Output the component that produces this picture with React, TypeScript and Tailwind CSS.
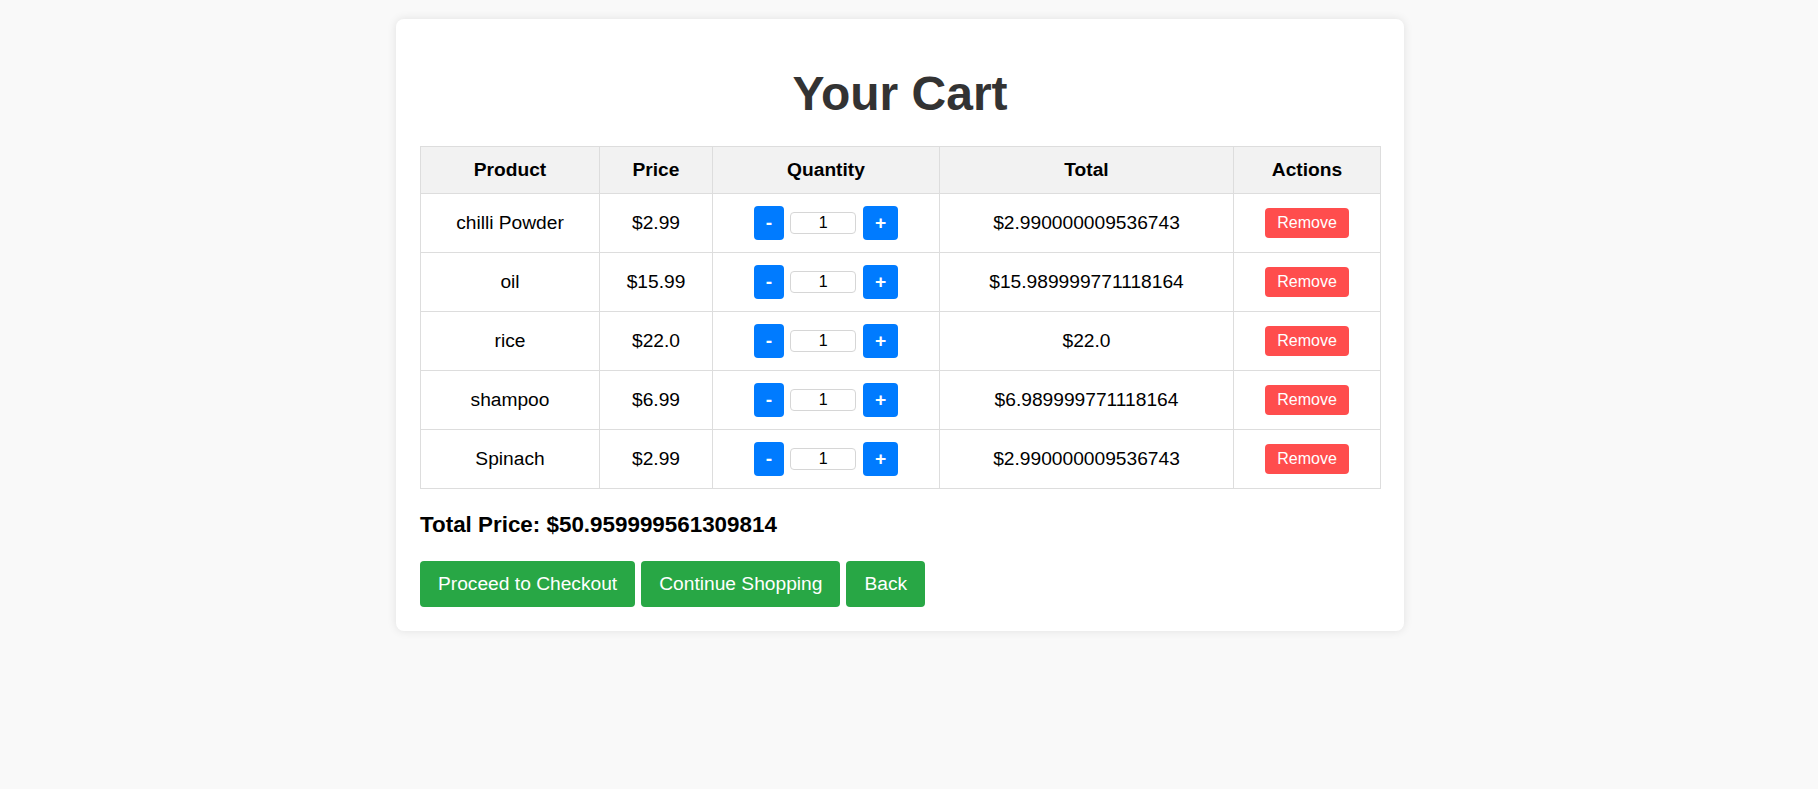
import React from "react";

interface CartItem {
  name: string;
  price: string;
  qty: number;
  total: string;
}

const items: CartItem[] = [
  { name: "chilli Powder", price: "$2.99", qty: 1, total: "$2.990000009536743" },
  { name: "oil", price: "$15.99", qty: 1, total: "$15.989999771118164" },
  { name: "rice", price: "$22.0", qty: 1, total: "$22.0" },
  { name: "shampoo", price: "$6.99", qty: 1, total: "$6.989999771118164" },
  { name: "Spinach", price: "$2.99", qty: 1, total: "$2.990000009536743" },
];

const cell = "border border-[#dddddd] px-3 py-3 text-center";

export default function App() {
  return (
    <div className="min-h-[789px] bg-[#f9f9f9] font-['Liberation_Sans',Arial,sans-serif] pt-[19px] pr-[18px] flex justify-center items-start">
      <div className="w-[1008px] bg-white rounded-lg shadow-[0_0_10px_rgba(0,0,0,0.1)] px-6 pt-[47px] pb-6">
        <h1 className="text-center text-[48px] leading-[55px] font-bold text-[#333333] mb-[25px]">Your Cart</h1>

        <table className="w-[960px] table-fixed border-collapse text-[19.2px] leading-[22px] text-black">
          <colgroup>
            <col className="w-[179px]" />
            <col className="w-[113px]" />
            <col className="w-[227px]" />
            <col className="w-[294px]" />
            <col className="w-[147px]" />
          </colgroup>
          <thead>
            <tr className="bg-[#f2f2f2]">
              {["Product", "Price", "Quantity", "Total", "Actions"].map((h) => (
                <th key={h} className={`${cell} font-bold`}>
                  {h}
                </th>
              ))}
            </tr>
          </thead>
          <tbody>
            {items.map((item) => (
              <tr key={item.name}>
                <td className={cell}>{item.name}</td>
                <td className={cell}>{item.price}</td>
                <td className={cell}>
                  <div className="flex items-center justify-center">
                    <button className="h-[34px] px-3 bg-[#007bff] text-white font-bold rounded-[4px] text-[19.2px]">-</button>
                    <input
                      readOnly
                      value={item.qty}
                      className="ml-[6px] w-[66px] h-[22px] border border-[#d6d6d6] rounded-[4px] text-center text-[16px] text-black"
                    />
                    <button className="ml-[7px] h-[34px] px-3 bg-[#007bff] text-white font-bold rounded-[4px] text-[19.2px]">+</button>
                  </div>
                </td>
                <td className={cell}>{item.total}</td>
                <td className={cell}>
                  <button className="h-[30px] px-3 bg-[#ff4d4d] text-white text-[16px] rounded-[4px]">Remove</button>
                </td>
              </tr>
            ))}
          </tbody>
        </table>

        <div className="mt-[23px] text-[22.4px] leading-[26px] font-bold text-black">Total Price: $50.959999561309814</div>

        <div className="mt-[23px] flex gap-[6px]">
          {["Proceed to Checkout", "Continue Shopping", "Back"].map((b) => (
            <button key={b} className="h-[46px] px-[18px] bg-[#28a745] text-white text-[19.2px] rounded-[4px]">
              {b}
            </button>
          ))}
        </div>
      </div>
    </div>
  );
}
